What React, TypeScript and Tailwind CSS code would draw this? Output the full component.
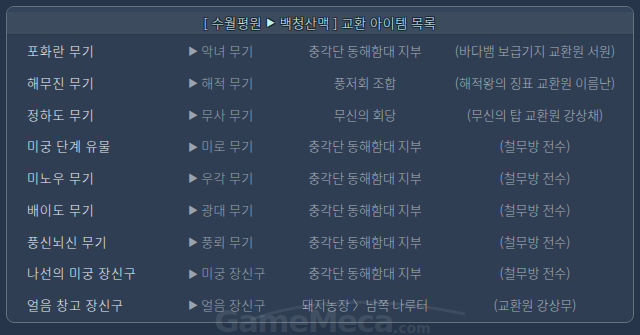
const rows: [string, string, string, string][] = [
  ["포화란 무기", "악녀 무기", "충각단 동해함대 지부", "(바다뱀 보급기지 교환원 서원)"],
  ["해무진 무기", "해적 무기", "풍저회 조합", "(해적왕의 징표 교환원 이름난)"],
  ["정하도 무기", "무사 무기", "무신의 회당", "(무신의 탑 교환원 강상채)"],
  ["미궁 단계 유물", "미로 무기", "충각단 동해함대 지부", "(철무방 전수)"],
  ["미노우 무기", "우각 무기", "충각단 동해함대 지부", "(철무방 전수)"],
  ["배이도 무기", "광대 무기", "충각단 동해함대 지부", "(철무방 전수)"],
  ["풍신뇌신 무기", "풍뢰 무기", "충각단 동해함대 지부", "(철무방 전수)"],
  ["나선의 미궁 장신구", "미궁 장신구", "충각단 동해함대 지부", "(철무방 전수)"],
  ["얼음 창고 장신구", "얼음 장신구", "돼지농장 〉남쪽 나루터", "(교환원 강상무)"],
];

export default function App() {
  return (
    <div className="relative w-[640px] h-[335px] overflow-hidden bg-[#26354a] pt-[6px] pl-[6px] font-['Noto_Sans_CJK_KR',sans-serif] font-light">
      <div className="w-[628px] h-[317px] rounded-[8px] border border-[#66737f] bg-[#2f3e53] overflow-hidden">
        <div className="h-[5px] bg-[#34445a]" />
        <div className="h-[23px] bg-[#3c4b5d] border-b border-[#2a3848] flex items-center justify-center text-[13px] tracking-[0.6px] text-[#dff6f4] [text-shadow:1px_1px_0_#10202c,-1px_-1px_0_#10202c,1px_-1px_0_#10202c,-1px_1px_0_#10202c]">
          [ 수월평원 <span className="mx-[4px] text-[9px] text-[#bfeff0]">▶</span> 백청산맥 ] 교환 아이템 목록
        </div>
        <div className="grid grid-cols-[161px_100px_154px_186px] auto-rows-[31.75px] pl-[20px] text-[13px]">
          {rows.map((r, i) => (
            <div key={i} className="contents">
              <div className="flex items-center text-[#eef2f5] whitespace-nowrap tracking-[0.8px]">{r[0]}</div>
              <div className="flex items-center text-[#9ba4ae] whitespace-nowrap tracking-[0.3px]">
                <span className="text-[10px] mr-[3px]">▶</span>
                {r[1]}
              </div>
              <div className="flex items-center justify-center text-[#a9b1ba] whitespace-nowrap">{r[2]}</div>
              <div className="flex items-center justify-center text-[#a9b1ba] whitespace-nowrap">{r[3]}</div>
            </div>
          ))}
        </div>
      </div>
      <svg className="absolute left-[250px] top-[292px]" width="220" height="30" viewBox="0 0 220 30">
        <path d="M0 28 Q 90 -4 215 22" fill="none" stroke="rgba(200,210,220,0.1)" strokeWidth="3" />
      </svg>
      <div className="absolute left-[214px] top-[306px] flex items-end font-['DejaVu_Sans',sans-serif] font-bold text-[rgba(200,210,220,0.13)] leading-none">
        <span className="text-[31px] tracking-[-1.5px]">GameMeca</span>
        <span className="text-[14px] mb-[2px]">.com</span>
      </div>
    </div>
  );
}
